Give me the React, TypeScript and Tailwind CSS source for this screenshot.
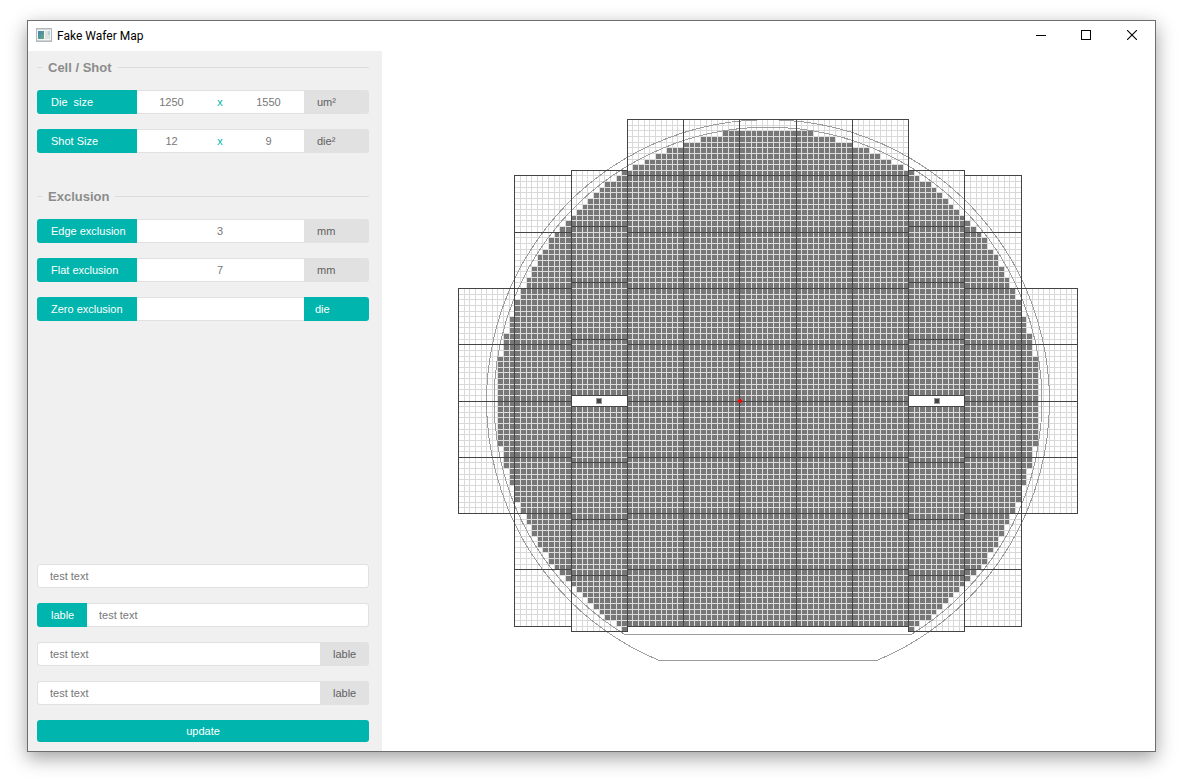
import React from "react";

const DIE = 5.627;
const CX = 309.49;
const CY = 281.55;
const OUTER = 281.35;
const INNER = 273.85;
const OUTER_FLAT = 259.2;
const INNER_FLAT = 233.5;

const gx = (k: number) => Math.round(CX + k * DIE);
const gy = (k: number) => Math.round(CY + k * DIE);

type Shot = { col: number; row: number };

function buildShots(): Shot[] {
  const shots: Shot[] = [];
  const half: Record<number, [number, number]> = {
    5: [-20, 10],
    4: [-40, 30],
    2: [-50, 30],
    1: [-50, 30],
    0: [-50, 30],
  };
  for (let c = -5; c <= 5; c++) {
    const left = c * 10 - 5;
    const a = Math.abs(c);
    if (a === 3) {
      for (const row of [-41, -31, -21, -11, 1, 11, 21, 31]) shots.push({ col: left, row });
    } else {
      const [from, to] = half[a];
      for (let row = from; row <= to; row += 10) shots.push({ col: left, row });
    }
  }
  return shots;
}

const SHOTS = buildShots();

function isGood(i: number, j: number) {
  const x = Math.max(Math.abs(i), Math.abs(i + 1));
  const y = Math.max(Math.abs(j), Math.abs(j + 1));
  return x * x + y * y <= (73 / 1.5) * (73 / 1.5);
}

function buildPaths() {
  let grid = "";
  let good = "";
  let goodBack = "";
  let frames = "";
  for (const { col, row } of SHOTS) {
    const x0 = gx(col);
    const x1 = gx(col + 10);
    const y0 = gy(row);
    const y1 = gy(row + 10);
    for (let n = 1; n < 10; n++) {
      grid += `M${gx(col + n)} ${y0}h1V${y1}h-1z`;
      grid += `M${x0} ${gy(row + n)}H${x1}v1H${x0}z`;
    }
    for (let i = col; i < col + 10; i++) {
      for (let j = row; j < row + 10; j++) {
        if (!isGood(i, j)) continue;
        const l = gx(i);
        const r = gx(i + 1);
        const t = gy(j);
        const b = gy(j + 1);
        goodBack += `M${l} ${t}H${r + 1}V${b + 1}H${l}z`;
        good += `M${l + 1} ${t + 1}H${r}V${b}H${l + 1}z`;
      }
    }
    frames += `M${x0 + 0.5} ${y0 + 0.5}H${x1 + 0.5}V${y1 + 0.5}H${x0 + 0.5}z`;
  }
  return { grid, good, goodBack, frames };
}

function flatCircle(r: number, flat: number) {
  const cx = CX + 0.5;
  const cy = CY + 0.5;
  const dx = Math.sqrt(r * r - flat * flat);
  return `M${cx - dx} ${cy + flat}A${r} ${r} 0 1 1 ${cx + dx} ${cy + flat}z`;
}

const PATHS = buildPaths();

function WaferMap() {
  return (
    <svg
      width="621"
      height="564"
      viewBox="0 0 621 564"
      shapeRendering="crispEdges"
      role="img"
      aria-label="Wafer map"
      className="shrink-0"
    >
      <path d={PATHS.grid} fill="#d9d9d9" />
      <path d={PATHS.goodBack} fill="#dcdcdc" />
      <path d={PATHS.good} fill="#777777" />
      <path d={flatCircle(OUTER, OUTER_FLAT)} fill="none" stroke="#9c9c9c" strokeWidth="1" />
      <path d={flatCircle(INNER, INNER_FLAT)} fill="none" stroke="#9c9c9c" strokeWidth="1" />
      <path d={PATHS.frames} fill="none" stroke="#444444" strokeWidth="1" />
      {[-35, 25].map((c) => {
        const x = gx(c);
        const y = gy(-1);
        const mid = Math.ceil(CX + (c + 5) * DIE);
        return (
          <g key={c}>
            <rect x={x + 0.5} y={y + 0.5} width={gx(c + 10) - x} height={gy(1) - y} fill="#fff" stroke="#444444" />
            <rect x={mid - 3} y={y + 3} width="6" height="6" fill="#999999" />
            <rect x={mid - 2} y={y + 4} width="4" height="4" fill="#444444" />
          </g>
        );
      })}
      <path d="M281 280h2v1h1v2h-1v1h-2v-1h-1v-2h1z" fill="#ff0000" />
    </svg>
  );
}

function SectionTitle({ children }: { children: React.ReactNode }) {
  return (
    <div className="flex h-[17px] items-center">
      <span className="h-px w-[5px] bg-[#dcdcdc]" />
      <h2 className="px-1.5 text-[13px] leading-[17px] font-bold text-[#8c8c8c]">{children}</h2>
      <span className="h-px flex-1 bg-[#dcdcdc]" />
    </div>
  );
}

const tag = "flex h-6 w-[100px] shrink-0 items-center rounded-l-[3px] bg-[#00b5ad] pl-3.5 text-white";
const unit = "flex h-6 w-[65px] shrink-0 items-center rounded-r-[3px] bg-[#e1e1e1] pl-[13px] text-[#606060]";
const middle = "flex h-6 min-w-0 flex-1 items-center border-y border-[#e1e1e1] bg-white pr-px";
const field = "h-full w-full min-w-0 flex-1 bg-transparent text-center text-[#777777] outline-none";

function PairRow(props: { id: string; label: string; a: string; b: string; unit: string }) {
  return (
    <div className="flex">
      <label htmlFor={props.id} className={`${tag} whitespace-pre`}>{props.label}</label>
      <div className={middle}>
        <input id={props.id} defaultValue={props.a} className={field} />
        <span className="w-7 text-center text-[#00b5ad]">x</span>
        <input aria-label={`${props.label} height`} defaultValue={props.b} className={field} />
      </div>
      <span className={unit}>{props.unit}</span>
    </div>
  );
}

function SingleRow(props: { id: string; label: string; value: string; children: React.ReactNode }) {
  return (
    <div className="flex">
      <label htmlFor={props.id} className={tag}>{props.label}</label>
      <div className={middle}>
        <input id={props.id} defaultValue={props.value} className={field} />
      </div>
      {props.children}
    </div>
  );
}

const textBox = "h-6 min-w-0 flex-1 border-[#e1e1e1] bg-white px-3 text-[#777777] outline-none";
const endTag = "flex h-6 w-[49px] shrink-0 items-center rounded-r-[3px] bg-[#e1e1e1] pl-[13px] text-[#606060]";

function AppIcon() {
  return (
    <svg width="16" height="14" viewBox="0 0 16 14" aria-hidden="true" className="mb-0.5">
      <defs>
        <linearGradient id="pane" x1="0" y1="0" x2="1" y2="1">
          <stop offset="0" stopColor="#4a7fb5" />
          <stop offset="1" stopColor="#5fae7c" />
        </linearGradient>
      </defs>
      <rect x="0.5" y="0.5" width="15" height="13" fill="#f4f4f4" stroke="#b4b8bd" />
      <rect x="1" y="1" width="14" height="1" fill="#d4d7db" />
      <rect x="2" y="3" width="6" height="8" fill="url(#pane)" />
      <rect x="9" y="3" width="3" height="8" fill="#e0e0e0" />
      <rect x="12" y="3" width="2" height="4" fill="#b4d3dc" />
      <rect x="12" y="7" width="2" height="4" fill="#d8e4e0" />
      <rect x="1" y="12" width="14" height="1" fill="#d0d3d6" />
    </svg>
  );
}

const winButton = "flex h-[30px] w-[46px] items-center justify-center pb-0.5";

export default function App() {
  return (
    <div className="flex min-h-screen bg-white pt-5 pr-10 pb-[26px] pl-[27px] font-['Liberation_Sans',Arial,sans-serif] text-[11px]">
      <div className="flex flex-1 flex-col border border-[#6e6e6e] bg-white shadow-[0_6px_18px_rgba(0,0,0,0.38)]">
        <header className="flex h-[30px] items-center pl-2">
          <AppIcon />
          <h1 className="ml-[5px] flex-1 font-[Roboto,'Open_Sans',sans-serif] text-[12px] leading-4 text-black">
            Fake Wafer Map
          </h1>
          <button type="button" aria-label="Minimize" className={winButton}>
            <svg width="10" height="10" viewBox="0 0 10 10" shapeRendering="crispEdges" overflow="visible">
              <path d="M1 5.5h10" stroke="#000" />
            </svg>
          </button>
          <button type="button" aria-label="Maximize" className={winButton}>
            <svg width="10" height="10" viewBox="0 0 10 10" shapeRendering="crispEdges">
              <rect x="0.5" y="0.5" width="9" height="9" fill="none" stroke="#000" />
            </svg>
          </button>
          <button type="button" aria-label="Close" className={winButton}>
            <svg width="10" height="10" viewBox="0 0 10 10">
              <path d="M0 0l10 10M10 0L0 10" stroke="#000" strokeWidth="1.1" />
            </svg>
          </button>
        </header>

        <div className="flex flex-1">
          <aside className="flex w-[354px] shrink-0 flex-col justify-between bg-[#f0f0f0] pt-2 pr-[13px] pb-[9px] pl-[9px]">
            <div className="flex flex-col gap-[35px]">
              <section className="flex flex-col gap-3.5">
                <SectionTitle>Cell / Shot</SectionTitle>
                <div className="flex flex-col gap-[15px]">
                  <PairRow id="die" label="Die  size" a="1250" b="1550" unit="um²" />
                  <PairRow id="shot" label="Shot Size" a="12" b="9" unit="die²" />
                </div>
              </section>
              <section className="flex flex-col gap-3.5">
                <SectionTitle>Exclusion</SectionTitle>
                <div className="flex flex-col gap-[15px]">
                  <SingleRow id="edge" label="Edge exclusion" value="3">
                    <span className={unit}>mm</span>
                  </SingleRow>
                  <SingleRow id="flat" label="Flat exclusion" value="7">
                    <span className={unit}>mm</span>
                  </SingleRow>
                  <SingleRow id="zero" label="Zero exclusion" value="">
                    <button
                      type="button"
                      className="h-6 w-[65px] shrink-0 rounded-r-[3px] bg-[#00b5ad] pl-[11px] text-left text-white"
                    >
                      die
                    </button>
                  </SingleRow>
                </div>
              </section>
            </div>

            <form className="flex flex-col gap-[15px]" onSubmit={(e) => e.preventDefault()}>
              <div className="flex">
                <input aria-label="Text" defaultValue="test text" className={`${textBox} rounded-[3px] border`} />
              </div>
              <div className="flex">
                <label
                  htmlFor="text2"
                  className="flex h-6 w-[50px] shrink-0 items-center rounded-l-[3px] bg-[#00b5ad] pl-3.5 text-white"
                >
                  lable
                </label>
                <input id="text2" defaultValue="test text" className={`${textBox} rounded-r-[3px] border-y border-r`} />
              </div>
              <div className="flex">
                <input id="text3" defaultValue="test text" className={`${textBox} rounded-l-[3px] border-y border-l`} />
                <label htmlFor="text3" className={endTag}>lable</label>
              </div>
              <div className="flex">
                <input id="text4" defaultValue="test text" className={`${textBox} rounded-l-[3px] border-y border-l`} />
                <label htmlFor="text4" className={endTag}>lable</label>
              </div>
              <button type="submit" className="h-[22px] rounded-[3px] bg-[#00b5ad] text-white">
                update
              </button>
            </form>
          </aside>

          <main className="flex flex-1 items-center justify-center">
            <WaferMap />
          </main>
        </div>
      </div>
    </div>
  );
}
